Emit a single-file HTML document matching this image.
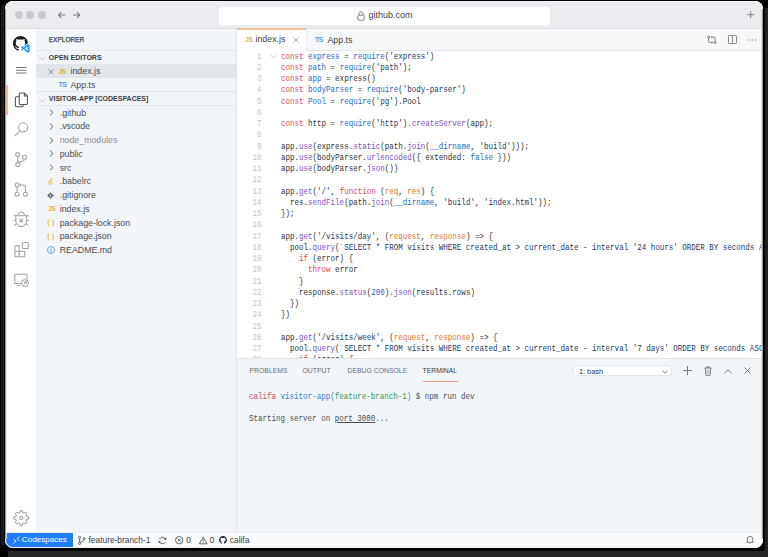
<!DOCTYPE html>
<html><head><meta charset="utf-8">
<style>
*{margin:0;padding:0;box-sizing:border-box}
html,body{width:768px;height:557px;overflow:hidden;background:#000;font-family:"Liberation Sans",sans-serif}
.a{position:absolute}
#win{position:absolute;left:5px;top:1px;width:758px;height:547px;border-radius:8px;overflow:hidden;background:#fff}
#frame{position:absolute;left:5px;top:1px;width:758px;height:547px;border-radius:8px;border:1px solid #f2f2f4}
#title{left:0;top:0;width:758px;height:27.5px;background:#ebecf0;border-bottom:1px solid #dcdde1}
.dot{width:8px;height:8px;border-radius:50%;background:#c9cacd;top:10px}
#url{left:213.5px;top:6px;width:331.5px;height:17.5px;background:#fff;border-radius:3px}
#url span{position:absolute;left:150px;top:3px;font-size:9px;color:#3b3d42;letter-spacing:0}
#act{left:0;top:27.5px;width:30.5px;height:504.5px;background:#fff}
#side{left:30.5px;top:27.5px;width:201px;height:504.5px;background:#f3f6f9;border-right:1px solid #e4e6e9}
.sh{font-size:6.55px;color:#44474c;white-space:nowrap;-webkit-text-stroke:0.25px #44474c}
.sec{font-size:7px;font-weight:700;color:#3a3d42;white-space:nowrap}
.hr{height:1px;background:#e4e7eb}
.it{font-size:8.8px;color:#484b50;white-space:nowrap}
#tabs{left:231.5px;top:27.5px;width:527px;height:22px;background:#f6f8fa;border-bottom:1px solid #e4e7eb}
#tab1{left:0;top:-0.6px;width:69px;height:22.6px;background:#fff;border-top:2px solid #ebbd9b}
#tab2{left:69px;top:0;width:66px;height:21px;border-left:1px solid #eceef1}
.tt{font-size:8.8px;color:#3b3d42;white-space:nowrap}
#ed{left:231.5px;top:49.5px;width:527px;height:307px;background:#fff;overflow:hidden}
.ln{position:absolute;left:0;width:24.4px;text-align:right;font-family:"Liberation Mono",monospace;font-size:8.8px;line-height:11.25px;color:#c2c5c9;transform:scaleX(0.851);transform-origin:100% 0}
.cl{position:absolute;left:44.5px;font-family:"Liberation Mono",monospace;font-size:8.8px;line-height:11.25px;color:#2c3137;white-space:pre;transform:scaleX(0.854);transform-origin:0 0}
.k{color:#d84a5a}.c{color:#1f68c9}.s{color:#173a6a}.f{color:#7a4fc9}.p{color:#e5742a}
#panel{left:231.5px;top:356.5px;width:527px;height:175.5px;background:#f3f6f9;border-top:1px solid #e1e4e8}
.pt{font-size:6.85px;color:#6a6d72;white-space:nowrap}
.term{font-family:"Liberation Mono",monospace;font-size:8.8px;white-space:pre;color:#4a4d52;transform:scaleX(0.854);transform-origin:0 0}
#status{left:0;top:531px;width:758px;height:16px;background:#f9fafb;border-top:1px solid #eceef0}
.st{font-size:8.4px;color:#3b3d42;white-space:nowrap}
svg{position:absolute;overflow:visible}
.lbl{position:absolute;font-size:7px;font-weight:700;line-height:1;letter-spacing:-0.5px;white-space:nowrap}
</style></head><body>
<div class="a" style="left:1px;top:4px;width:3px;height:541px;background:#1c1c1c"></div>
<div class="a" style="left:764.5px;top:8px;width:3.5px;height:549px;background:#222"></div>
<div class="a" style="left:8px;top:551px;width:760px;height:6px;background:#252525"></div>
<div id="win">
 <div id="title" class="a">
  <div class="dot a" style="left:9.8px"></div>
  <div class="dot a" style="left:21.4px"></div>
  <div class="dot a" style="left:32.7px"></div>
  <svg style="left:52px;top:10px" width="10" height="8" viewBox="0 0 10 8"><path d="M8.2 4H1.5M4.3 1.2L1.5 4l2.8 2.8" fill="none" stroke="#737a84" stroke-width="1.1"/></svg>
  <svg style="left:67px;top:10px" width="10" height="8" viewBox="0 0 10 8"><path d="M1 4h6.8M5 1.2l2.8 2.8L5 6.8" fill="none" stroke="#737a84" stroke-width="1.1"/></svg>
  <div id="url" class="a">
   <svg style="left:138px;top:4px" width="8" height="10" viewBox="0 0 8 10"><rect x="0.8" y="4.2" width="6.4" height="5" rx="1" fill="none" stroke="#7a7f88" stroke-width="1"/><path d="M2 4.2V2.8a2 2 0 0 1 4 0v1.4" fill="none" stroke="#7a7f88" stroke-width="1"/></svg>
   <span>github.com</span>
  </div>
  <svg style="left:741.6px;top:10px" width="8" height="8" viewBox="0 0 8 8"><path d="M3.7 0.3v6.8M0.3 3.7h6.8" stroke="#7d838c" stroke-width="1"/></svg>
 </div>

 <div id="act" class="a">
  <svg style="left:8px;top:7px" width="15" height="15" viewBox="0 0 16 16"><path fill="#1b1f23" d="M8 0C3.58 0 0 3.58 0 8c0 3.54 2.29 6.53 5.47 7.59.4.07.55-.17.55-.38 0-.19-.01-.82-.01-1.49-2.01.37-2.53-.49-2.69-.94-.09-.23-.48-.94-.82-1.13-.28-.15-.68-.52-.01-.53.63-.01 1.08.58 1.23.82.72 1.21 1.87.87 2.33.66.07-.52.28-.87.51-1.07-1.78-.2-3.64-.89-3.64-3.95 0-.87.31-1.59.82-2.15-.08-.2-.36-1.02.08-2.12 0 0 .67-.21 2.2.82.64-.18 1.32-.27 2-.27.68 0 1.36.09 2 .27 1.53-1.04 2.2-.82 2.2-.82.44 1.1.16 1.92.08 2.12.51.56.82 1.27.82 2.15 0 3.07-1.87 3.75-3.65 3.95.29.25.54.73.54 1.48 0 1.07-.01 1.93-.01 2.2 0 .21.15.46.55.38A8.013 8.013 0 0016 8c0-4.42-3.58-8-8-8z"/></svg>
  <svg style="left:16.2px;top:15px" width="8.8" height="8.8" viewBox="0 0 100 100"><path fill="#fff" stroke="#fff" stroke-width="16" stroke-linejoin="round" d="M71 2L30 40 12 27C10 25 7 25 5 27L1 31C-1 33-1 36 1 38L17 50 1 62C-1 64-1 67 1 69L5 73C7 75 10 75 12 73L30 60 71 98C73 100 76 100 78 99L95 91C97 90 98 88 98 85V15C98 12 97 10 95 9L78 1C76 0 73 0 71 2Z"/><path fill="#1f9cf0" fill-rule="evenodd" d="M71 2L30 40 12 27C10 25 7 25 5 27L1 31C-1 33-1 36 1 38L17 50 1 62C-1 64-1 67 1 69L5 73C7 75 10 75 12 73L30 60 71 98C73 100 76 100 78 99L95 91C97 90 98 88 98 85V15C98 12 97 10 95 9L78 1C76 0 73 0 71 2ZM75 27L44 50 75 73Z"/></svg>
  <svg style="left:11px;top:38.9px" width="10.5" height="7" viewBox="0 0 10.5 7"><path d="M0 0.5h10.5M0 3.3h10.5M0 6h10.5" stroke="#6c6f74" stroke-width="0.95"/></svg>
  
  <svg style="left:6px;top:60.5px" width="20" height="20" viewBox="0 0 20 20"><g fill="none" stroke="#4e5156" stroke-width="1.05"><path d="M8.2 11.7V5.2a1.2 1.2 0 0 1 1.2-1.2h4l3 3v7.2a1.2 1.2 0 0 1-1.2 1.2H9.4a1.2 1.2 0 0 1-1.2-1.2z"/><path d="M13.4 4v3h3"/><path d="M8.2 7.7H5.6a1.2 1.2 0 0 0-1.2 1.2v7.7a1.2 1.2 0 0 0 1.2 1.2h5.4a1.2 1.2 0 0 0 1.2-1.2v-1.2"/></g></svg>
  <svg style="left:6px;top:90.5px" width="20" height="20" viewBox="0 0 20 20"><g fill="none" stroke="#a0a3a8" stroke-width="1.05"><circle cx="12.2" cy="8.3" r="4.6"/><path d="M9 11.6L3.8 17.2"/></g></svg>
  <svg style="left:6px;top:120.5px" width="20" height="20" viewBox="0 0 20 20"><g fill="none" stroke="#a0a3a8" stroke-width="1.05"><circle cx="6.7" cy="5.6" r="2"/><circle cx="13.5" cy="8.3" r="2"/><circle cx="6.8" cy="15.6" r="2"/><path d="M6.7 7.6v6M13.5 10.3c0 2-2 2.6-6.7 3"/></g></svg>
  <svg style="left:6px;top:150.5px" width="20" height="20" viewBox="0 0 20 20"><g fill="none" stroke="#a0a3a8" stroke-width="1.05"><circle cx="6.1" cy="5.9" r="2"/><circle cx="6.1" cy="15.3" r="2"/><circle cx="14.4" cy="15.3" r="2"/><path d="M6.1 7.9v5.4M14.4 13.3V8a2 2 0 0 0-2-2H10.5"/></g><path d="M10.2 4.2v3.4L8 5.9z" fill="#a0a3a8"/></svg>
  <svg style="left:6px;top:180.5px" width="20" height="20" viewBox="0 0 20 20"><g fill="none" stroke="#a0a3a8" stroke-width="1.05"><path d="M4.8 6.8H15.6V11.5C15.6 15 13.2 17.6 10.2 17.6C7.2 17.6 4.8 15 4.8 11.5Z"/><path d="M7 6.8C7 4.5 8.4 2.9 10.2 2.9C12 2.9 13.4 4.5 13.4 6.8"/><path d="M4.8 7.5L3 5.8M15.6 7.5L17.4 5.8M4.8 11.5H2.6M15.6 11.5H17.8M5.3 14.6L3.2 16.7M15.1 14.6L17.2 16.7M8.3 9.6L12.1 13.4M12.1 9.6L8.3 13.4"/></g></svg>
  <svg style="left:6px;top:210.5px" width="20" height="20" viewBox="0 0 20 20"><g fill="none" stroke="#a0a3a8" stroke-width="1.05"><path d="M3.9 7.6a1 1 0 0 1 1-1h3.2v5.6h5.6v4.5a1 1 0 0 1-1 1H4.9a1 1 0 0 1-1-1z"/><path d="M3.9 12.2h4.2v5.5"/><rect x="11.3" y="3.4" width="6" height="6" rx="1"/></g></svg>
  <svg style="left:6px;top:241.5px" width="20" height="20" viewBox="0 0 20 20"><g fill="none" stroke="#a0a3a8" stroke-width="1.05"><path d="M10.2 13.5H3.8V4.2h12.3v5.3"/><path d="M6.1 15.5h3"/><circle cx="14" cy="13.1" r="3.4"/><path d="M12.7 14.4l2.6-2.6M13.3 11.8h2v2"/></g></svg>
  <svg style="left:6px;top:479.5px" width="20" height="20" viewBox="0 0 20 20"><g fill="none" stroke="#8e9196" stroke-width="0.95" stroke-linejoin="round"><path d="M8.85 4.57 L9.10 2.68 L11.30 2.68 L11.55 4.57 L13.09 5.20 L14.60 4.05 L16.15 5.60 L15.00 7.11 L15.63 8.65 L17.52 8.90 L17.52 11.10 L15.63 11.35 L15.00 12.89 L16.15 14.40 L14.60 15.95 L13.09 14.80 L11.55 15.43 L11.30 17.32 L9.10 17.32 L8.85 15.43 L7.31 14.80 L5.80 15.95 L4.25 14.40 L5.40 12.89 L4.77 11.35 L2.88 11.10 L2.88 8.90 L4.77 8.65 L5.40 7.11 L4.25 5.60 L5.80 4.05 L7.31 5.20Z"/><circle cx="10.2" cy="10" r="1.7"/></g></svg>
 </div>
 <div id="side" class="a">
  <div class="sh a" style="left:13.2px;top:7px">EXPLORER</div>
  <div class="hr a" style="left:0;top:21.8px;width:200px"></div>
  <div class="sec a" style="left:13.3px;top:25px">OPEN EDITORS</div>
  <div class="a" style="left:0;top:35.6px;width:200px;height:14px;background:#e2e5e9"></div>
  <div class="it a" style="left:35px;top:37.5px">index.js</div>
  <div class="it a" style="left:35px;top:51.5px">App.ts</div>
  <div class="hr a" style="left:0;top:62.8px;width:200px"></div>
  <div class="sec a" style="left:13.3px;top:66px">VISITOR-APP [CODESPACES]</div>
  <div class="hr a" style="left:0;top:76.5px;width:200px"></div>
  <div class="it a" style="left:24.2px;top:79px">.github</div>
  <div class="it a" style="left:24.2px;top:92.7px">.vscode</div>
  <div class="it a" style="left:24.2px;top:106.5px;color:#8a8d92">node_modules</div>
  <div class="it a" style="left:24.2px;top:120.2px">public</div>
  <div class="it a" style="left:24.2px;top:134px">src</div>
  <div class="it a" style="left:24.2px;top:147.7px">.babelrc</div>
  <div class="it a" style="left:24.2px;top:161.5px">.gitignore</div>
  <div class="it a" style="left:24.2px;top:175.2px">index.js</div>
  <div class="it a" style="left:24.2px;top:189px">package-lock.json</div>
  <div class="it a" style="left:24.2px;top:202.7px">package.json</div>
  <div class="it a" style="left:24.2px;top:216.5px">README.md</div>
  <svg style="left:3.9px;top:27.8px" width="7" height="5" viewBox="0 0 7 5"><path d="M0.5 1L3.5 4 6.5 1" fill="none" stroke="#b5b8bd" stroke-width="0.8"/></svg>
  <svg style="left:3.9px;top:69.3px" width="7" height="5" viewBox="0 0 7 5"><path d="M0.5 1L3.5 4 6.5 1" fill="none" stroke="#b5b8bd" stroke-width="0.8"/></svg>
  <svg style="left:12.2px;top:40.0px" width="6" height="6" viewBox="0 0 6 6"><path d="M0.5 0.5L5.3 5.3M5.3 0.5L0.5 5.3" stroke="#74777c" stroke-width="0.8"/></svg>
  <div class="lbl" style="left:22.9px;top:39.3px;color:#e3b341">JS</div>
  <div class="lbl" style="left:22.9px;top:52.8px;color:#4aa3f0">TS</div>
  <svg style="left:13.0px;top:80.5px" width="5" height="7" viewBox="0 0 5 7"><path d="M1 0.6L4 3.5 1 6.4" fill="none" stroke="#5a5d62" stroke-width="0.95"/></svg>
  <svg style="left:13.0px;top:94.2px" width="5" height="7" viewBox="0 0 5 7"><path d="M1 0.6L4 3.5 1 6.4" fill="none" stroke="#5a5d62" stroke-width="0.95"/></svg>
  <svg style="left:13.0px;top:108.0px" width="5" height="7" viewBox="0 0 5 7"><path d="M1 0.6L4 3.5 1 6.4" fill="none" stroke="#5a5d62" stroke-width="0.95"/></svg>
  <svg style="left:13.0px;top:121.7px" width="5" height="7" viewBox="0 0 5 7"><path d="M1 0.6L4 3.5 1 6.4" fill="none" stroke="#5a5d62" stroke-width="0.95"/></svg>
  <svg style="left:13.0px;top:135.5px" width="5" height="7" viewBox="0 0 5 7"><path d="M1 0.6L4 3.5 1 6.4" fill="none" stroke="#5a5d62" stroke-width="0.95"/></svg>
  <svg style="left:12.0px;top:149.5px" width="6" height="7" viewBox="0 0 6 7"><path d="M4.5 0.5C2.5 1.5 1 3 1 4.8 1 6 2 6.5 3 6.3 4.3 6 4.8 4.8 4 4 3.3 3.3 2 3.8 1.3 4.5" fill="none" stroke="#efc24e" stroke-width="1.05"/></svg>
  <svg style="left:11.8px;top:163.3px" width="7" height="7" viewBox="0 0 7 7"><path d="M3.5 0.2L6.8 3.5 3.5 6.8 0.2 3.5Z" fill="#5b636b"/><circle cx="3.3" cy="2.5" r="0.55" fill="#f3f6f9"/><circle cx="3.3" cy="4.6" r="0.55" fill="#f3f6f9"/><path d="M3.3 2.5v2.1M3.3 2.5l1.4 1.2" stroke="#f3f6f9" stroke-width="0.5"/></svg>
  <div class="lbl" style="left:12.3px;top:176.6px;color:#e3b341">JS</div>
  <svg style="left:11.6px;top:190.9px" width="8" height="8" viewBox="0 0 8 8"><path d="M2.2 0.6C1.4 0.6 1.3 1 1.3 1.8V3C1.3 3.6 1 3.9 0.5 3.9 1 3.9 1.3 4.2 1.3 4.8V6.1C1.3 6.9 1.4 7.3 2.2 7.3M5.2 0.6C6 0.6 6.1 1 6.1 1.8V3C6.1 3.6 6.4 3.9 6.9 3.9 6.4 3.9 6.1 4.2 6.1 4.8V6.1C6.1 6.9 6 7.3 5.2 7.3" fill="none" stroke="#e6b84a" stroke-width="1"/></svg>
  <svg style="left:11.6px;top:204.5px" width="8" height="8" viewBox="0 0 8 8"><path d="M2.2 0.6C1.4 0.6 1.3 1 1.3 1.8V3C1.3 3.6 1 3.9 0.5 3.9 1 3.9 1.3 4.2 1.3 4.8V6.1C1.3 6.9 1.4 7.3 2.2 7.3M5.2 0.6C6 0.6 6.1 1 6.1 1.8V3C6.1 3.6 6.4 3.9 6.9 3.9 6.4 3.9 6.1 4.2 6.1 4.8V6.1C6.1 6.9 6 7.3 5.2 7.3" fill="none" stroke="#e6b84a" stroke-width="1"/></svg>
  <svg style="left:11.7px;top:217.8px" width="8" height="8" viewBox="0 0 8 8"><circle cx="4" cy="4" r="3.5" fill="none" stroke="#4aa3f0" stroke-width="0.9"/><path d="M4 3.4v2.7" stroke="#4aa3f0" stroke-width="1"/><circle cx="4" cy="2.2" r="0.55" fill="#4aa3f0"/></svg>
 </div>

 <div id="tabs" class="a">
  <div id="tab1" class="a"><span class="tt a" style="left:19px;top:4.5px">index.js</span></div>
  <div class="lbl" style="left:8.5px;top:7.6px;color:#e3b341">JS</div>
  <svg style="left:56.1px;top:8.0px" width="6" height="6" viewBox="0 0 6 6"><path d="M0.4 0.4L5.6 5.6M5.6 0.4L0.4 5.6" stroke="#9a9da2" stroke-width="0.8"/></svg>
  <div class="lbl" style="left:78.2px;top:7.6px;color:#4aa3f0">TS</div>
  <svg style="left:470.0px;top:6.5px" width="10" height="10" viewBox="0 0 10 10"><g fill="none" stroke="#6e7176" stroke-width="0.85"><circle cx="1.6" cy="2" r="0.95"/><circle cx="8.1" cy="7.6" r="0.95"/><path d="M1.6 3V6.6a0.8 0.8 0 0 0 .8.8H5.2M8.1 6.6V3a0.8 0.8 0 0 0-.8-.8H4.8"/></g><path d="M4.8 6.3L6.3 7.4 4.8 8.5ZM5.2 1.1L3.7 2.2 5.2 3.3Z" fill="#6e7176"/></svg>
  <svg style="left:491.3px;top:6.8px" width="9" height="9" viewBox="0 0 9 9"><g fill="none" stroke="#7a7d82" stroke-width="0.85"><rect x="0.5" y="0.5" width="8" height="8" rx="0.6"/><path d="M4.5 0.5v8"/></g></svg>
  <svg style="left:511.3px;top:10.5px" width="9" height="2" viewBox="0 0 9 2"><g fill="#7a7d82"><circle cx="0.8" cy="1" r="0.65"/><circle cx="4.2" cy="1" r="0.65"/><circle cx="7.6" cy="1" r="0.65"/></g></svg>
  <div id="tab2" class="a"><span class="tt a" style="left:21px;top:6px">App.ts</span></div>
 </div>

 <div id="ed" class="a">
  <svg style="left:33.6px;top:3.8px" width="7" height="5" viewBox="0 0 7 5"><path d="M0.6 1L3.5 3.8 6.4 1" fill="none" stroke="#b9bcc0" stroke-width="0.8"/></svg>
  <pre class="ln a" style="top:1px">1
2
3
4
5
6
7
8
9
10
11
12
13
14
15
16
17
18
19
20
21
22
23
24
25
26
27
28</pre>
  <pre class="cl a" style="top:1px"><span class="k">const</span> <span class="c">express</span> = <span class="c">require</span>(<span class="s">'express'</span>)
<span class="k">const</span> <span class="c">path</span> = <span class="c">require</span>(<span class="s">'path'</span>);
<span class="k">const</span> <span class="c">app</span> = express()
<span class="k">const</span> <span class="c">bodyParser</span> = <span class="c">require</span>(<span class="s">'body-parser'</span>)
<span class="k">const</span> <span class="c">Pool</span> = <span class="c">require</span>(<span class="s">'pg'</span>).Pool

<span class="k">const</span> http = <span class="c">require</span>(<span class="s">'http'</span>).<span class="f">createServer</span>(app);

app.<span class="f">use</span>(express.<span class="f">static</span>(path.<span class="f">join</span>(<span class="c">__dirname</span>, <span class="s">'build'</span>)));
app.<span class="f">use</span>(bodyParser.<span class="f">urlencoded</span>({ extended: <span class="c">false</span> }))
app.<span class="f">use</span>(bodyParser.<span class="f">json</span>())

app.<span class="f">get</span>(<span class="s">'/'</span>, <span class="k">function</span> (<span class="p">req</span>, <span class="p">res</span>) {
  res.<span class="f">sendFile</span>(path.<span class="f">join</span>(<span class="c">__dirname</span>, <span class="s">'build'</span>, <span class="s">'index.html'</span>));
});

app.<span class="f">get</span>(<span class="s">'/visits/day'</span>, (<span class="p">request</span>, <span class="p">response</span>) =&gt; {
  pool.<span class="f">query</span>(<span class="s">`SELECT * FROM visits WHERE created_at &gt; current_date - interval '24 hours' ORDER BY seconds ASC`</span>, (error, results) =&gt; {
    <span class="k">if</span> (error) {
      <span class="k">throw</span> error
    }
    response.<span class="f">status</span>(<span class="c">200</span>).<span class="f">json</span>(results.rows)
  })
})

app.<span class="f">get</span>(<span class="s">'/visits/week'</span>, (<span class="p">request</span>, <span class="p">response</span>) =&gt; {
  pool.<span class="f">query</span>(<span class="s">`SELECT * FROM visits WHERE created_at &gt; current_date - interval '7 days' ORDER BY seconds ASC`</span>, (error, results) =&gt; {
    <span class="k">if</span> (error) {</pre>
 </div>

 <div id="panel" class="a">
  <div class="a" style="left:336.5px;top:6.60px;width:99px;height:11px;background:#fff;border:0.8px solid #e4e7eb;border-radius:2.5px"><span class="a" style="left:5px;top:1.2px;font-size:7.3px;color:#2f3237;white-space:nowrap">1: bash</span><svg style="left:88px;top:3.8px" width="6" height="4" viewBox="0 0 6 4"><path d="M0.5 0.6L3 3.2 5.5 0.6" fill="none" stroke="#6a6d72" stroke-width="0.8"/></svg></div>
  <svg style="left:446.0px;top:7.80px" width="9" height="9" viewBox="0 0 9 9"><path d="M4.5 0v9M0 4.5h9" stroke="#6a6d72" stroke-width="0.9"/></svg>
  <svg style="left:467.0px;top:7.30px" width="8" height="10" viewBox="0 0 8 10"><g fill="none" stroke="#6a6d72" stroke-width="0.85"><path d="M0.5 2h7M2.8 2V0.8h2.4V2M1.3 2l0.5 7.3h4.4L6.7 2"/><path d="M3 3.5v4.5M5 3.5v4.5" stroke-width="0.6"/></g></svg>
  <svg style="left:487.0px;top:10.30px" width="8" height="5" viewBox="0 0 8 5"><path d="M0.5 4.3L4 0.8 7.5 4.3" fill="none" stroke="#6a6d72" stroke-width="0.9"/></svg>
  <svg style="left:507.5px;top:8.80px" width="7" height="7" viewBox="0 0 7 7"><path d="M0.5 0.5L6.5 6.5M6.5 0.5L0.5 6.5" stroke="#6a6d72" stroke-width="0.9"/></svg>
  <div class="pt a" style="left:13px;top:8.4px">PROBLEMS</div>
  <div class="pt a" style="left:66px;top:8.4px">OUTPUT</div>
  <div class="pt a" style="left:111px;top:8.4px">DEBUG CONSOLE</div>
  <div class="pt a" style="left:186px;top:8.4px;color:#3a3d42">TERMINAL</div>
  <div class="a" style="left:186px;top:22.3px;width:35px;height:1.2px;background:#f39a86"></div>
  <div class="term a" style="left:12.7px;top:33px"><span style="color:#d04a5c">califa</span> <span style="color:#3279d6">visitor-app(</span><span style="color:#2e9556">feature-branch-1</span><span style="color:#3279d6">)</span> $ npm run dev</div>
  <div class="term a" style="left:12.7px;top:55px">Starting server on <u style="text-decoration-thickness:0.7px;text-underline-offset:1px">port 3000</u>...</div>
 </div>

 <div id="status" class="a">
  <div class="a" style="left:0;top:0;width:67.5px;height:15px;background:#1f7ef8"></div>
  <div class="st a" style="left:16.8px;top:2.40px;color:#fff;font-size:8.1px">Codespaces</div>
  <svg style="left:7.8px;top:3px" width="7" height="8" viewBox="0 0 7 8"><path d="M0.6 2.9L2.8 5.1 0.6 7.3M6.4 0.5L4.2 2.7 6.4 4.9" fill="none" stroke="#fff" stroke-width="0.95"/></svg>
  <svg style="left:72.7px;top:2.70px" width="8" height="9" viewBox="0 0 8 9"><g fill="none" stroke="#4e5156" stroke-width="0.85"><circle cx="1.6" cy="1.4" r="1.05"/><circle cx="1.6" cy="7.5" r="1.05"/><circle cx="6.2" cy="2.6" r="1.05"/><path d="M1.6 2.5v3.9M6.2 3.7c0 1.6-1.8 2.1-4.6 2.6"/></g></svg>
  <svg style="left:153.4px;top:2.60px" width="9" height="9" viewBox="0 0 9 9"><g fill="none" stroke="#4e5156" stroke-width="0.85"><path d="M7.6 3.4A3.4 3.4 0 0 0 1.3 3.2M1.2 5.4A3.4 3.4 0 0 0 7.5 5.8"/></g><path d="M8.4 1.6L7.9 4.2 5.7 3.1ZM0.4 7.3L0.9 4.8 3.1 5.8Z" fill="#4e5156"/></svg>
  <svg style="left:169.6px;top:2.80px" width="9" height="9" viewBox="0 0 9 9"><g fill="none" stroke="#4e5156" stroke-width="0.85"><circle cx="4.2" cy="4.2" r="3.7"/><path d="M2.6 2.6l3.2 3.2M5.8 2.6L2.6 5.8"/></g></svg>
  <svg style="left:193.5px;top:2.60px" width="9" height="9" viewBox="0 0 9 9"><g fill="none" stroke="#4e5156" stroke-width="0.85"><path d="M4.2 0.8L8 7.8H0.4z"/><path d="M4.2 3.2v2.4M4.2 6.3v0.7"/></g></svg>
  <svg style="left:214.4px;top:2.60px" width="8" height="8" viewBox="0 0 16 16"><path fill="#24292e" d="M8 0C3.58 0 0 3.58 0 8c0 3.54 2.29 6.53 5.47 7.59.4.07.55-.17.55-.38 0-.19-.01-.82-.01-1.49-2.01.37-2.53-.49-2.69-.94-.09-.23-.48-.94-.82-1.13-.28-.15-.68-.52-.01-.53.63-.01 1.08.58 1.23.82.72 1.21 1.87.87 2.33.66.07-.52.28-.87.51-1.07-1.78-.2-3.64-.89-3.64-3.95 0-.87.31-1.59.82-2.15-.08-.2-.36-1.02.08-2.12 0 0 .67-.21 2.2.82.64-.18 1.32-.27 2-.27.68 0 1.36.09 2 .27 1.53-1.04 2.2-.82 2.2-.82.44 1.1.16 1.92.08 2.12.51.56.82 1.27.82 2.15 0 3.07-1.87 3.75-3.65 3.95.29.25.54.73.54 1.48 0 1.07-.01 1.93-.01 2.2 0 .21.15.46.55.38A8.013 8.013 0 0016 8c0-4.42-3.58-8-8-8z"/></svg>
  <svg style="left:741px;top:1.70px" width="8" height="9" viewBox="0 0 8 9"><g fill="none" stroke="#6a6d72" stroke-width="0.85"><path d="M1.3 6.8V4a2.7 2.7 0 0 1 5.4 0v2.8L7.5 7.3H0.5z"/><path d="M3.2 8h1.6"/></g></svg>
  <div class="st a" style="left:83.5px;top:2.20px">feature-branch-1</div>
  <div class="st a" style="left:181.3px;top:2.20px">0</div>
  <div class="st a" style="left:204.7px;top:2.20px">0</div>
  <div class="st a" style="left:224.8px;top:2.20px">califa</div>
 </div>
</div>
<div id="frame"></div>
<div class="a" style="left:5px;top:9px;width:2.2px;height:530px;background:linear-gradient(90deg,#7a7a7a,#e8e8e8 70%,rgba(255,255,255,0))"></div>
<div class="a" style="left:760.6px;top:9px;width:2.4px;height:530px;background:linear-gradient(90deg,rgba(255,255,255,0),#c8c8c8 50%,#6a6a6a)"></div>
<div class="a" style="left:6px;top:85px;width:1.9px;height:29.5px;background:#f5b995"></div>
</body></html>
